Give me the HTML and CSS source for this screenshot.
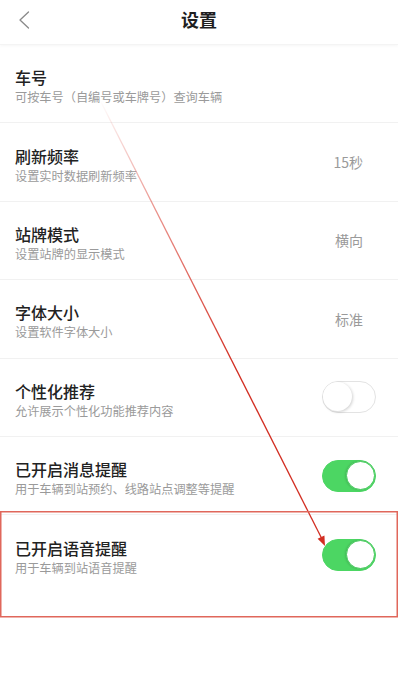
FILE: index.html
```html
<!DOCTYPE html>
<html lang="zh-CN">
<head>
<meta charset="utf-8">
<title>设置</title>
<link rel="stylesheet" href="styles.css">
</head>
<body>
<div class="page">
  <header class="topbar">
    <span class="back">
      <svg width="12" height="18" viewBox="0 0 12 18"><path d="M10.5 1 L2 9 L10.5 17" fill="none" stroke="#8a8a8a" stroke-width="1.3" stroke-linecap="round" stroke-linejoin="round"/></svg>
    </span>
    <h1 class="title">设置</h1>
  </header>
  <ul class="list">
    <li class="row">
      <div class="text"><div class="name">车号</div><div class="desc">可按车号（自编号或车牌号）查询车辆</div></div>
    </li>
    <li class="row">
      <div class="text"><div class="name">刷新频率</div><div class="desc">设置实时数据刷新频率</div></div>
      <span class="value">15秒</span>
    </li>
    <li class="row">
      <div class="text"><div class="name">站牌模式</div><div class="desc">设置站牌的显示模式</div></div>
      <span class="value">横向</span>
    </li>
    <li class="row">
      <div class="text"><div class="name">字体大小</div><div class="desc">设置软件字体大小</div></div>
      <span class="value">标准</span>
    </li>
    <li class="row">
      <div class="text"><div class="name">个性化推荐</div><div class="desc">允许展示个性化功能推荐内容</div></div>
      <span class="toggle"><span class="knob"></span></span>
    </li>
    <li class="row">
      <div class="text"><div class="name">已开启消息提醒</div><div class="desc">用于车辆到站预约、线路站点调整等提醒</div></div>
      <span class="toggle on"><span class="knob"></span></span>
    </li>
    <li class="row last">
      <div class="text"><div class="name">已开启语音提醒</div><div class="desc">用于车辆到站语音提醒</div></div>
      <span class="toggle on"><span class="knob"></span></span>
    </li>
  </ul>
  <svg class="annot" width="398" height="700" viewBox="0 0 398 700">
    <defs>
      <linearGradient id="lg" gradientUnits="userSpaceOnUse" x1="100" y1="100" x2="325" y2="545">
        <stop offset="0" stop-color="#d8372b" stop-opacity="0"/>
        <stop offset="0.25" stop-color="#d8372b" stop-opacity="0.55"/>
        <stop offset="0.6" stop-color="#d22e22" stop-opacity="1"/>
        <stop offset="1" stop-color="#d22e22" stop-opacity="1"/>
      </linearGradient>
    </defs>
    <line x1="100" y1="100" x2="322" y2="539" stroke="url(#lg)" stroke-width="1.3"/>
    <polygon points="325,546 317.6,538.8 324.4,535.4" fill="#d22e22"/>
    <rect x="0.75" y="511.75" width="396.5" height="105" fill="none" stroke="#e0675b" stroke-width="1.5"/>
  </svg>
</div>
</body>
</html>
```

FILE: styles.css
```css
html, body {
  margin: 0;
  padding: 0;
  background: #ffffff;
}

body {
  font-family: "Noto Sans CJK SC", "Noto Sans", sans-serif;
  color: #222222;
}

.page {
  position: relative;
  width: 398px;
  height: 700px;
  overflow: hidden;
  background: #ffffff;
}

.topbar {
  position: relative;
  height: 45px;
  display: flex;
  align-items: center;
  justify-content: center;
  box-shadow: 0 1px 3px rgba(0, 0, 0, 0.04);
  border-bottom: 1px solid #f4f4f4;
  box-sizing: border-box;
}

.back {
  position: absolute;
  left: 18px;
  top: 11px;
  display: flex;
}

.title {
  margin: 0;
  font-size: 18px;
  font-weight: 700;
  line-height: 24px;
  color: #1f1f1f;
  margin-top: -6px;
}

.list {
  list-style: none;
  margin: 0;
  padding: 0;
}

.row {
  height: 78.4px;
  box-sizing: border-box;
  border-bottom: 1px solid #f1f1f1;
  display: flex;
  align-items: center;
  justify-content: space-between;
  padding: 0 22px 0 15px;
}

.row.last {
  border-bottom: none;
}

.text {
  padding-top: 5px;
}

.name {
  font-size: 16px;
  line-height: 22px;
  font-weight: 500;
  color: #222222;
}

.desc {
  font-size: 12.2px;
  line-height: 18px;
  color: #9a9a9a;
}

.value {
  font-size: 14px;
  color: #9a9a9a;
  margin-right: 13px;
}

.toggle {
  position: relative;
  width: 54px;
  height: 32px;
  box-sizing: border-box;
  border-radius: 16px;
  border: 1.5px solid #e3e3e3;
  background: #ffffff;
  flex-shrink: 0;
}

.toggle .knob {
  position: absolute;
  top: 0;
  left: 0;
  width: 29px;
  height: 29px;
  border-radius: 50%;
  background: #ffffff;
  box-shadow: 1px 1px 3px rgba(0, 0, 0, 0.18);
}

.toggle.on {
  background: #4cd663;
  border-color: #4cd663;
}

.toggle.on .knob {
  left: auto;
  right: 0;
  box-sizing: border-box;
  border: 1px solid #46c95c;
  box-shadow: -1px 0 2px rgba(0, 0, 0, 0.12);
}

.annot {
  position: absolute;
  left: 0;
  top: 0;
  pointer-events: none;
}
```
